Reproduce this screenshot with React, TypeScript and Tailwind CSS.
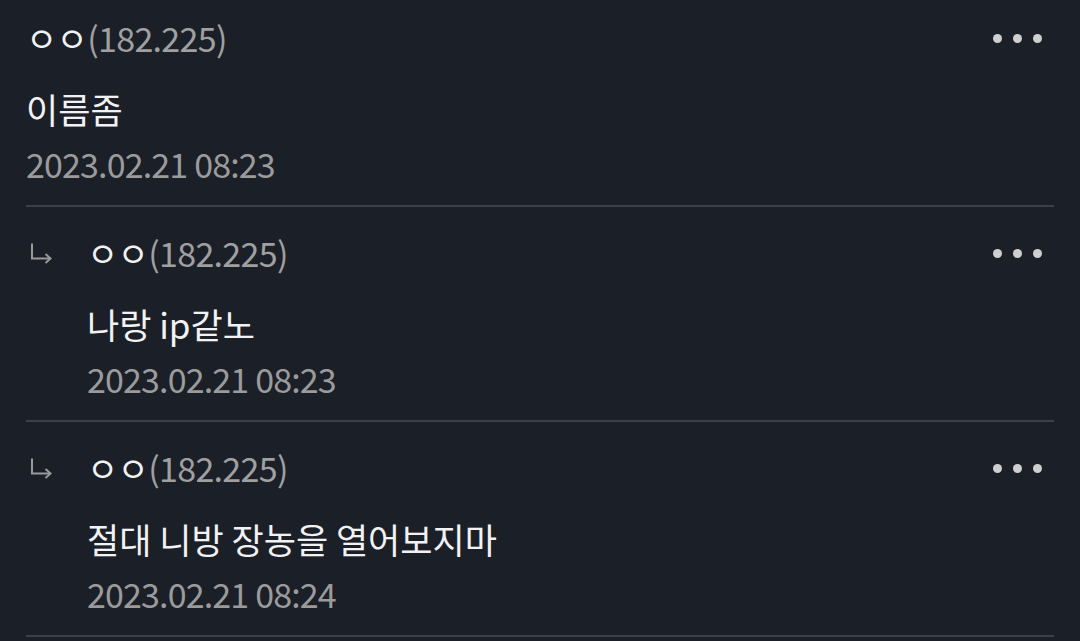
import { Fragment } from 'react'

type Comment = {
  name: string
  ip: string
  text: string
  date: string
  reply?: boolean
}

const comments: Comment[] = [
  { name: 'ㅇㅇ', ip: '(182.225)', text: '이름좀', date: '2023.02.21 08:23' },
  { name: 'ㅇㅇ', ip: '(182.225)', text: '나랑 ip같노', date: '2023.02.21 08:23', reply: true },
  { name: 'ㅇㅇ', ip: '(182.225)', text: '절대 니방 장농을 열어보지마', date: '2023.02.21 08:24', reply: true },
]

function ReplyArrow() {
  return (
    <svg width="24" height="22" viewBox="0 0 24 22" className="text-[#9a9a9a]">
      <path d="M3 1.5 V16.5 H21" fill="none" stroke="currentColor" strokeWidth="2" />
      <path d="M16.5 12 L21.5 16.5 L16.5 21" fill="none" stroke="currentColor" strokeWidth="2" />
    </svg>
  )
}

function MoreDots() {
  return (
    <div className="flex items-center gap-[11px]">
      <span className="w-[9px] h-[9px] rounded-full bg-[#cfcfcf]" />
      <span className="w-[9px] h-[9px] rounded-full bg-[#cfcfcf]" />
      <span className="w-[9px] h-[9px] rounded-full bg-[#cfcfcf]" />
    </div>
  )
}

export default function App() {
  return (
    <div
      className="w-[1080px] h-[641px] overflow-hidden bg-[#1b1f27] px-[26px]"
      style={{ fontFamily: '"Noto Sans CJK KR", "Noto Sans", sans-serif' }}
    >
      {comments.map((c, i) => (
        <Fragment key={i}>
          <div className={i === 0 ? 'pt-[16px] pb-[21px]' : 'pt-[24px] pb-[21px]'}>
            <div className="flex h-[44px] items-center">
              {c.reply && (
                <div className="w-[61px] shrink-0 pl-[3px]">
                  <ReplyArrow />
                </div>
              )}
              <div className="flex items-center text-[34px] leading-none tracking-[-0.02em]">
                <span className="text-[#f2f2f2]">{c.name}</span>
                <span className="text-[#a0a0a0]">{c.ip}</span>
              </div>
              <div className="ml-auto mr-[12px]">
                <MoreDots />
              </div>
            </div>
            <div className={c.reply ? 'pl-[61px]' : ''}>
              <p className="mt-[26px] h-[44px] flex items-center text-[35px] text-[#f2f2f2] leading-none">
                {c.text}
              </p>
              <p className="mt-[14px] h-[40px] flex items-center text-[34px] text-[#9b9b9b] leading-none tracking-[-0.025em]">
                {c.date}
              </p>
            </div>
          </div>
          <div className="h-[2px] bg-[#3d4049]" />
        </Fragment>
      ))}
    </div>
  )
}
